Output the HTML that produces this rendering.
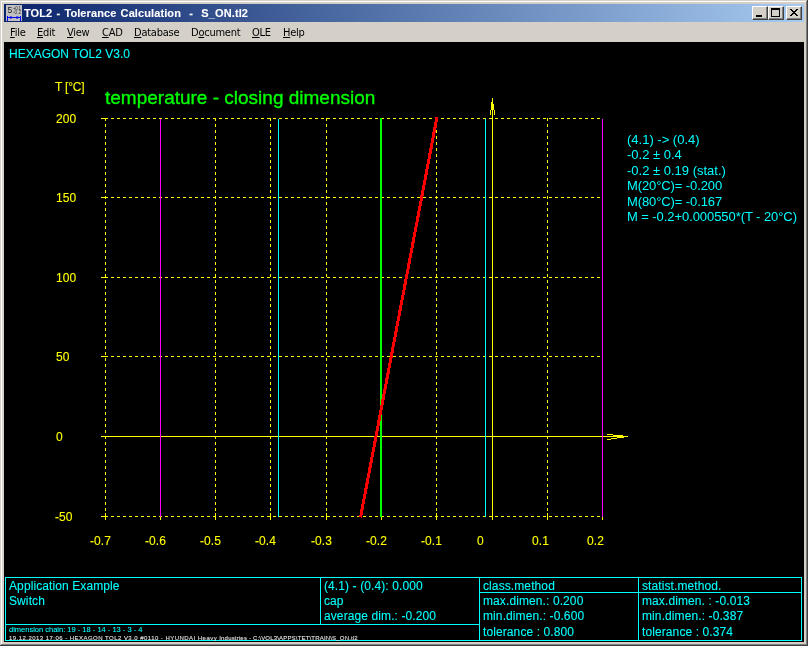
<!DOCTYPE html>
<html>
<head>
<meta charset="utf-8">
<title>TOL2 - Tolerance Calculation - S_ON.tl2</title>
<style>
html,body{margin:0;padding:0;}
body{width:808px;height:646px;overflow:hidden;background:#d4d0c8;position:relative;font-family:"Liberation Sans",sans-serif;}
.abs{position:absolute;}
.t{position:absolute;white-space:pre;line-height:1;font-size:12px;letter-spacing:0.1px;-webkit-text-stroke:0.1px;}
.r{letter-spacing:0;-webkit-text-stroke:0;}
.cy{color:#00ffff;}
.ye{color:#ffff00;}
#titlebar{left:4px;top:4px;width:800px;height:18px;background:linear-gradient(to right,#0a246a,#a6caf0);}
#ttl{left:24px;top:8px;color:#fff;font-weight:bold;font-size:11px;letter-spacing:0.1px;word-spacing:1px;}
.btn{position:absolute;top:6px;width:16px;height:14px;background:#d4d0c8;box-sizing:border-box;border:1px solid;border-color:#fff #404040 #404040 #fff;box-shadow:inset -1px -1px 0 #808080;}
#menubar{left:4px;top:22px;width:800px;height:20px;background:#d4d0c8;}
.m{position:absolute;top:27px;font-size:11px;color:#000;white-space:pre;line-height:1;letter-spacing:-0.25px;font-family:"DejaVu Sans Condensed","DejaVu Sans","Liberation Sans",sans-serif;}
.m u{text-decoration:underline;}
#client{left:4px;top:42px;width:800px;height:600px;background:#000;}
</style>
</head>
<body>
<!-- window frame -->
<div class="abs" style="left:0;top:0;width:808px;height:646px;background:#404040;"></div>
<div class="abs" style="left:0;top:0;width:807px;height:645px;background:#d4d0c8;"></div>
<div class="abs" style="left:1px;top:1px;width:806px;height:644px;background:#808080;"></div>
<div class="abs" style="left:1px;top:1px;width:805px;height:643px;background:#ffffff;"></div>
<div class="abs" style="left:2px;top:2px;width:804px;height:642px;background:#d4d0c8;"></div>

<div id="titlebar" class="abs"></div>
<div id="menubar" class="abs"></div>
<div id="client" class="abs"></div>
<div id="layer" class="abs" style="left:0;top:0;width:808px;height:646px;will-change:transform;">
<div id="ttl" class="t">TOL2 - Tolerance Calculation  -  S_ON.tl2</div>
<div class="btn" style="left:752px;"></div>
<div class="btn" style="left:768px;"></div>
<div class="btn" style="left:786px;"></div>


<svg class="abs" style="left:0;top:0;" width="808" height="24" viewBox="0 0 808 24" shape-rendering="crispEdges">
  <!-- app icon -->
  <rect x="6" y="5" width="16" height="16" fill="#c0c0c0"/>
  <text x="7.5" y="13" font-family="Liberation Sans, sans-serif" font-size="8.5" fill="#202020">5</text>
  <text x="13" y="10" font-family="Liberation Sans, sans-serif" font-size="4.5" fill="#303030" textLength="8">+0.1</text>
  <text x="13" y="14" font-family="Liberation Sans, sans-serif" font-size="4.5" fill="#303030" textLength="8">-0.2</text>
  <path d="M7.5 16V21M20.5 16V21M7 17.5H21" stroke="#0000ff" fill="none"/>
  <path d="M8 17.5l3.5-1.6v3.2zM20 17.5l-3.5-1.6v3.2z" fill="#0000ff" shape-rendering="auto"/>
  <!-- caption button glyphs -->
  <rect x="756" y="15" width="6" height="2" fill="#000"/>
  <path d="M771 8h9v9h-9zM772 10v6h7v-6z" fill="#000" fill-rule="evenodd"/>
  <path d="M790 9h2v1h-2zM796 9h2v1h-2zM791 10h2v1h-2zM795 10h2v1h-2zM792 11h4v1h-4zM793 12h2v1h-2zM792 13h4v1h-4zM791 14h2v1h-2zM795 14h2v1h-2zM790 15h2v1h-2zM796 15h2v1h-2z" fill="#000"/>
</svg>

<div class="m" style="left:10px;"><u>F</u>ile</div>
<div class="m" style="left:37px;"><u>E</u>dit</div>
<div class="m" style="left:67px;"><u>V</u>iew</div>
<div class="m" style="left:102px;"><u>C</u>AD</div>
<div class="m" style="left:134px;"><u>D</u>atabase</div>
<div class="m" style="left:191px;">D<u>o</u>cument</div>
<div class="m" style="left:252px;"><u>O</u>LE</div>
<div class="m" style="left:283px;"><u>H</u>elp</div>


<svg class="abs" style="left:0;top:0;" width="808" height="646" viewBox="0 0 808 646" shape-rendering="crispEdges" fill="none" stroke-width="1">
  <!-- dashed grid -->
  <path d="M105 118.5H602M105 197.5H602M105 277.5H602M105 356.5H602M105 516.5H602M105.5 118V517M215.5 118V517M270.5 118V517M326.5 118V517M436.5 118V517M547.5 118V517" stroke="#ffff00" stroke-dasharray="3 3"/>
  <!-- ticks -->
  <path d="M101 118.5H108M101 197.5H108M101 277.5H108M101 356.5H108M101 516.5H108M105.5 513V520M160.5 517V520M215.5 513V520M270.5 513V520M326.5 513V520M381.5 517V520M436.5 513V520M547.5 513V520M602.5 517V520" stroke="#ffff00"/>
  <!-- axes -->
  <path d="M101 436.5H628M492.5 98V520" stroke="#ffff00"/>
  <!-- arrow heads -->
  <path d="M607 434.5H613M613 435.5H623M617 437.5H624M611 438.5H617M607 439.5H611" stroke="#ffff00"/>
  <path d="M491 102H493V104H494V110H491Z" fill="#ffff00" stroke="none"/>
  <path d="M490.5 110V115M494.5 110V115" stroke="#ffff00"/>
  <!-- limit lines -->
  <path d="M160.5 119V517M602.5 119V517" stroke="#ff00ff"/>
  <path d="M278.5 119V517M485.5 119V517" stroke="#00ffff"/>
  <path d="M381 118V517" stroke="#00ff00" stroke-width="2"/>
  <!-- result line -->
  <line x1="437" y1="117" x2="360.5" y2="517.5" stroke="#ff0000" stroke-width="3"/>
  <!-- info table -->
  <path d="M5.5 577.5H801.5V640.5H5.5ZM320.5 577V624M479.5 577V640M638.5 577V640M5 624.5H479M479 592.5H801" stroke="#00ffff"/>
</svg>

<div class="t cy" style="left:9px;top:48px;letter-spacing:0;">HEXAGON TOL2 V3.0</div>
<div class="t ye" style="left:55px;top:81px;letter-spacing:-0.2px;">T [°C]</div>
<div class="t" id="ctitle" style="left:105px;top:88px;font-size:19px;letter-spacing:0;-webkit-text-stroke:0.35px;color:#00ff00;">temperature - closing dimension</div>
<div class="t ye" style="left:56px;top:113px;">200</div>
<div class="t ye" style="left:56px;top:192px;">150</div>
<div class="t ye" style="left:56px;top:272px;">100</div>
<div class="t ye" style="left:56px;top:351px;">50</div>
<div class="t ye" style="left:56px;top:431px;">0</div>
<div class="t ye" style="left:55px;top:511px;">-50</div>
<div class="t ye" style="left:90px;top:535px;">-0.7</div>
<div class="t ye" style="left:145px;top:535px;">-0.6</div>
<div class="t ye" style="left:200px;top:535px;">-0.5</div>
<div class="t ye" style="left:255px;top:535px;">-0.4</div>
<div class="t ye" style="left:311px;top:535px;">-0.3</div>
<div class="t ye" style="left:366px;top:535px;">-0.2</div>
<div class="t ye" style="left:421px;top:535px;">-0.1</div>
<div class="t ye" style="left:477px;top:535px;">0</div>
<div class="t ye" style="left:532px;top:535px;">0.1</div>
<div class="t ye" style="left:587px;top:535px;">0.2</div>
<div class="t cy r" style="left:627px;top:133px;font-size:13px;">(4.1) -&gt; (0.4)</div>
<div class="t cy r" style="left:627px;top:148px;font-size:13px;">-0.2 ± 0.4</div>
<div class="t cy r" style="left:627px;top:164px;font-size:13px;">-0.2 ± 0.19 (stat.)</div>
<div class="t cy r" style="left:627px;top:179px;font-size:13px;letter-spacing:-0.1px;">M(20°C)= -0.200</div>
<div class="t cy r" style="left:627px;top:195px;font-size:13px;letter-spacing:-0.1px;">M(80°C)= -0.167</div>
<div class="t cy r" style="left:627px;top:210px;font-size:13px;letter-spacing:-0.07px;">M = -0.2+0.000550*(T - 20°C)</div>
<div class="t cy" style="left:9px;top:580px;">Application Example</div>
<div class="t cy" style="left:9px;top:595px;">Switch</div>
<div class="t cy" style="left:324px;top:580px;">(4.1) - (0.4): 0.000</div>
<div class="t cy" style="left:324px;top:595px;">cap</div>
<div class="t cy" style="left:324px;top:610px;">average dim.: -0.200</div>
<div class="t cy" style="left:483px;top:580px;">class.method</div>
<div class="t cy" style="left:483px;top:595px;">max.dimen.: 0.200</div>
<div class="t cy" style="left:483px;top:610px;">min.dimen.: -0.600</div>
<div class="t cy" style="left:483px;top:626px;">tolerance : 0.800</div>
<div class="t cy" style="left:642px;top:580px;">statist.method.</div>
<div class="t cy" style="left:642px;top:595px;">max.dimen. : -0.013</div>
<div class="t cy" style="left:642px;top:610px;">min.dimen.: -0.387</div>
<div class="t cy" style="left:642px;top:626px;">tolerance : 0.374</div>
<div class="t cy" style="left:9px;top:626px;font-size:7.5px;letter-spacing:0;">dimension chain: 19 - 18 - 14 - 13 - 3 - 4</div>
<div class="t" style="left:9px;top:635px;font-size:6px;letter-spacing:0.33px;color:#e0e0e0;"><span style="letter-spacing:0.46px">19.12.2013 17:06 - HEXAGON TOL2 V3.0 #0110 - HYUNDAI Heavy </span><span style="letter-spacing:0.18px">Industries - C:\VOL3\APPS\TET\TRAIN\S_ON.tl2</span></div>

</div>
</body>
</html>
